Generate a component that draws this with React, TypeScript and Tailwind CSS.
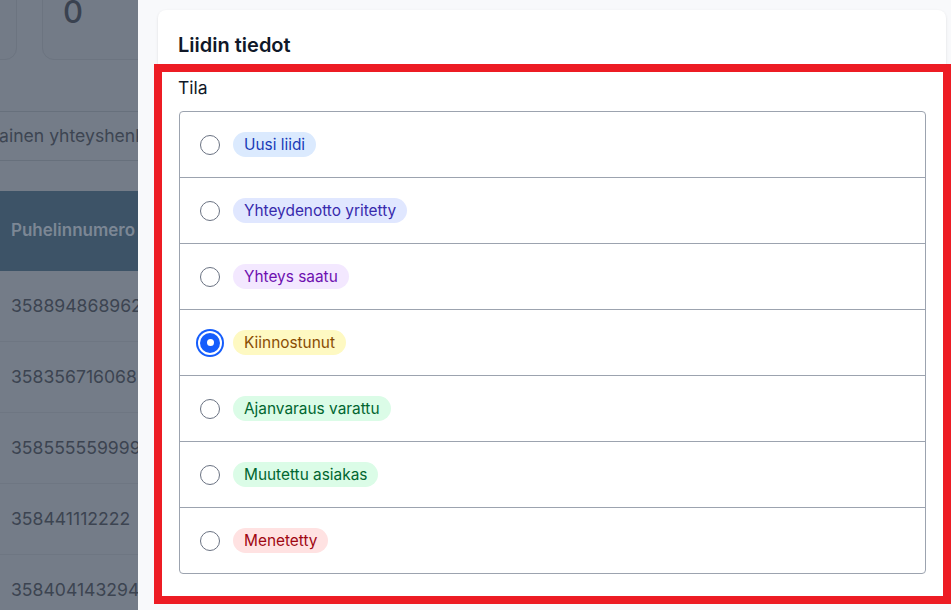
import React from 'react';

// Status options for the lead ("liidi") radio group
const statuses = [
  { label: 'Uusi liidi', badge: 'bg-blue-100 text-blue-800' },
  { label: 'Yhteydenotto yritetty', badge: 'bg-indigo-100 text-indigo-800' },
  { label: 'Yhteys saatu', badge: 'bg-purple-100 text-purple-800' },
  { label: 'Kiinnostunut', badge: 'bg-yellow-100 text-yellow-800' },
  { label: 'Ajanvaraus varattu', badge: 'bg-green-100 text-green-800' },
  { label: 'Muutettu asiakas', badge: 'bg-green-100 text-green-800' },
  { label: 'Menetetty', badge: 'bg-red-100 text-red-800' },
];

const phones = ['358894868962', '358356716068', '358555559999', '358441112222', '358404143294'];

function Radio({ checked }: { checked: boolean }) {
  if (checked) {
    return (
      <span className="flex h-5 w-5 shrink-0 items-center justify-center rounded-full bg-blue-600 ring-2 ring-blue-600 ring-offset-2">
        <span className="h-[7px] w-[7px] rounded-full bg-white" />
      </span>
    );
  }
  return <span className="h-5 w-5 shrink-0 rounded-full border border-gray-500 bg-white" />;
}

export default function App() {
  const selected = 'Kiinnostunut';

  return (
    <div className="relative flex h-[610px] w-[951px] overflow-hidden font-['Inter','Liberation_Sans',sans-serif]">
      {/* Dimmed page behind the drawer */}
      <div className="w-[138px] shrink-0 overflow-hidden bg-[#747c88]">
        <div className="ml-[-100px] mt-[-40px] flex h-[100px] gap-[25px]">
          <div className="w-[117px] shrink-0 rounded-xl border border-[#6c7480] bg-[#737b87]" />
          <div className="w-[160px] shrink-0 rounded-xl border border-[#6c7480] bg-[#737b87] pl-5 pt-[33px]">
            <span className="text-[31px] font-medium leading-9 text-[#3a4250]">0</span>
          </div>
        </div>

        <div className="mt-[51px] flex h-[50px] items-center border-y border-[#67707c]">
          <span className="ml-[-1px] whitespace-nowrap text-[17.6px] text-[#3d4552]">ainen yhteyshenk</span>
        </div>

        <div className="mt-[30px] flex h-[80px] items-center bg-[#3d5367] pl-[11px]">
          <span className="whitespace-nowrap text-[17px] font-semibold text-[#7c8795]">Puhelinnumero</span>
        </div>

        {phones.map((p) => (
          <div key={p} className="flex h-[71px] items-center border-b border-[#6e7682] pl-[11px]">
            <span className="whitespace-nowrap text-[17.6px] text-[#3c4451]">{p}</span>
          </div>
        ))}
      </div>

      {/* Drawer */}
      <div className="flex-1 bg-[#f8f9fb] pl-5 pr-[5px] pt-[10px]">
        <div className="h-[588px] rounded-lg bg-white px-5 pt-[21px] shadow-sm">
          <h2 className="text-[20px] font-semibold leading-7 text-gray-900">Liidin tiedot</h2>
          <p className="mt-[17px] text-[17.5px] leading-6 text-gray-900">Tila</p>

          <div className="ml-px mt-[11px] divide-y divide-[#9ca3af] rounded border border-[#9ca3af]">
            {statuses.map((s) => (
              <label key={s.label} className="flex h-[66px] items-center gap-[13px] pl-5 last:h-[65px]">
                <Radio checked={s.label === selected} />
                <span className={`inline-flex h-[25px] items-center rounded-full px-[11px] text-[15.4px] ${s.badge}`}>
                  {s.label}
                </span>
              </label>
            ))}
          </div>
        </div>
      </div>

      {/* Red highlight annotation */}
      <div className="pointer-events-none absolute left-[154px] top-[64px] h-[540px] w-[797px] border-8 border-[#ed1c24]" />
    </div>
  );
}
